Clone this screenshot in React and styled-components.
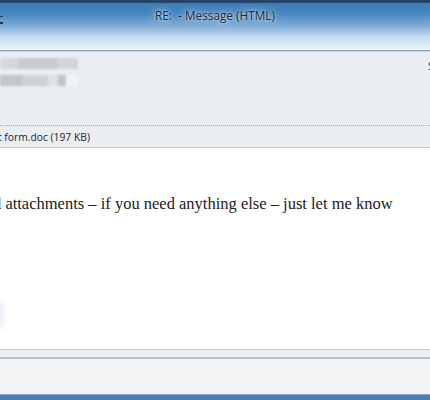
import React from "react";
import styled, { createGlobalStyle } from "styled-components";

const Global = createGlobalStyle`
  html, body { margin: 0; padding: 0; }
  body { width: 430px; height: 400px; overflow: hidden; background: #fff; }
`;

const Window = styled.div`
  width: 430px; height: 400px; display: flex; flex-direction: column; overflow: hidden;
  font-family: "Open Sans", "Noto Sans", sans-serif;
`;

const TitleBar = styled.div`
  height: 47px; flex: none; border-top: 3px solid #24446a;
  background: linear-gradient(180deg, #3f7bb7 0%, #4585c0 22%, #7eabd6 48%, #c3d9ee 72%, #eef4fa 100%);
  display: flex; align-items: flex-start; justify-content: center; position: relative;
`;

const Title = styled.div`
  margin-top: 4px; font-size: 11.8px; color: #1c2a3c;
  text-shadow: 0 0 8px rgba(235, 243, 252, 0.9), 0 0 3px rgba(235, 243, 252, 0.9);
  white-space: pre;
`;

const QuickMark = styled.div`
  position: absolute; left: 0; top: 13px; width: 3px; height: 5px;
  border-top: 1px solid #1f3550; border-bottom: 2px solid #1f3550;
`;

const Rule = styled.div`
  height: ${p => p.$h || 1}px; flex: none; background: ${p => p.$c};
`;

const Header = styled.div`
  height: 73px; flex: none; background: #eaedf2; position: relative;
  padding: 6px 0 0 0; box-sizing: border-box; display: flex; flex-direction: column; gap: 6px;
`;

const Blur = styled.div`
  display: flex; height: 11px; filter: blur(1.2px);
`;

const Blot = styled.div`
  width: ${p => p.$w}px; background: ${p => p.$c};
`;

const Sent = styled.div`
  position: absolute; right: -4px; top: 6px; font-size: 11px; color: #444;
`;

const AttachRow = styled.div`
  height: 22px; flex: none; background: #eaedf2; border-top: 1px dotted #a9aeb6;
  box-sizing: border-box; display: flex; align-items: center; overflow: hidden;
`;

const AttachName = styled.span`
  margin-left: -2px; font-size: 10.3px; color: #1f1f1f; white-space: nowrap;
`;

const Body = styled.div`
  flex: none; height: 201px; background: #fff; overflow: hidden; position: relative;
  padding-top: 46px; box-sizing: border-box;
`;

const BodyText = styled.p`
  margin: 0 0 0 -7px; font-family: "Liberation Serif", "Times New Roman", serif;
  font-size: 16.5px; color: #202020; white-space: nowrap;
`;

const Smudge = styled.div`
  position: absolute; left: -5px; top: 154px; width: 9px; height: 26px;
  background: #eeeef9; filter: blur(2px);
`;

const Footer = styled.div`
  flex: 1; background: #f2f3f5;
`;

export default function App() {
  return (
    <Window>
      <Global />
      <TitleBar>
        <QuickMark />
        <Title>RE:  - Message (HTML)</Title>
      </TitleBar>
      <Rule $c="#8ea2b7" />
      <Rule $c="#c6d0db" />
      <Header>
        <Blur>
          <Blot $w={18} $c="#d6d8dc" />
          <Blot $w={40} $c="#c9cbcf" />
          <Blot $w={20} $c="#d3d5d9" />
        </Blur>
        <Blur>
          <Blot $w={22} $c="#c4c6ca" />
          <Blot $w={26} $c="#cfd1d5" />
          <Blot $w={10} $c="#e0e2e6" />
          <Blot $w={8} $c="#c2c4c8" />
          <Blot $w={12} $c="#f2f3f6" />
        </Blur>
        <Sent>S</Sent>
      </Header>
      <AttachRow>
        <AttachName>t form.doc (197 KB)</AttachName>
      </AttachRow>
      <Rule $c="#c3c5c9" />
      <Body>
        <BodyText>d attachments – if you need anything else – just let me know</BodyText>
        <Smudge />
      </Body>
      <Rule $c="#c8c9cc" />
      <Rule $h={7} $c="#ebedf1" />
      <Rule $h={2} $c="#bcc1c8" />
      <Footer />
      <Rule $c="#93a9bf" />
      <Rule $h={5} $c="#4b7fb9" />
    </Window>
  );
}
